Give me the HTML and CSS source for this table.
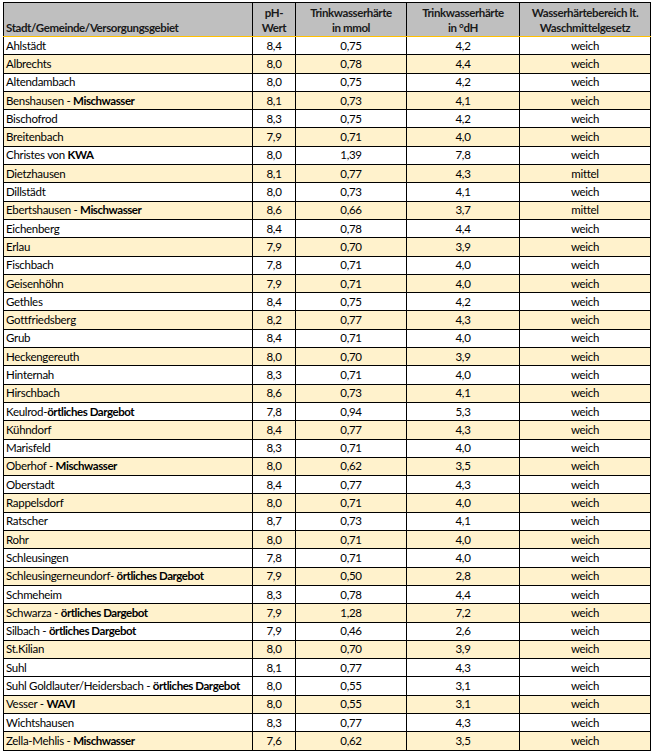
FILE: index.html
```html
<!DOCTYPE html>
<html lang="de">
<head>
<meta charset="utf-8">
<title>Wasserhärte</title>
<link rel="stylesheet" href="styles.css">
</head>
<body>
<table class="haerte">
<colgroup>
<col class="c-name"><col class="c-ph"><col class="c-mmol"><col class="c-dh"><col class="c-bereich">
</colgroup>
<thead>
<tr>
<th class="name">Stadt/Gemeinde/Versorgungsgebiet</th>
<th>pH-<br>Wert</th>
<th>Trinkwasserhärte<br>in mmol</th>
<th>Trinkwasserhärte<br>in °dH</th>
<th>Wasserhärtebereich lt.<br>Waschmittelgesetz</th>
</tr>
</thead>
<tbody>
<tr><td class="name">Ahlstädt</td><td>8,4</td><td>0,75</td><td>4,2</td><td>weich</td></tr>
<tr class="alt"><td class="name">Albrechts</td><td>8,0</td><td>0,78</td><td>4,4</td><td>weich</td></tr>
<tr><td class="name">Altendambach</td><td>8,0</td><td>0,75</td><td>4,2</td><td>weich</td></tr>
<tr class="alt"><td class="name">Benshausen - <b>Mischwasser</b></td><td>8,1</td><td>0,73</td><td>4,1</td><td>weich</td></tr>
<tr><td class="name">Bischofrod</td><td>8,3</td><td>0,75</td><td>4,2</td><td>weich</td></tr>
<tr class="alt"><td class="name">Breitenbach</td><td>7,9</td><td>0,71</td><td>4,0</td><td>weich</td></tr>
<tr><td class="name">Christes von <b>KWA</b></td><td>8,0</td><td>1,39</td><td>7,8</td><td>weich</td></tr>
<tr class="alt"><td class="name">Dietzhausen</td><td>8,1</td><td>0,77</td><td>4,3</td><td>mittel</td></tr>
<tr><td class="name">Dillstädt</td><td>8,0</td><td>0,73</td><td>4,1</td><td>weich</td></tr>
<tr class="alt"><td class="name">Ebertshausen - <b>Mischwasser</b></td><td>8,6</td><td>0,66</td><td>3,7</td><td>mittel</td></tr>
<tr><td class="name">Eichenberg</td><td>8,4</td><td>0,78</td><td>4,4</td><td>weich</td></tr>
<tr class="alt"><td class="name">Erlau</td><td>7,9</td><td>0,70</td><td>3,9</td><td>weich</td></tr>
<tr><td class="name">Fischbach</td><td>7,8</td><td>0,71</td><td>4,0</td><td>weich</td></tr>
<tr class="alt"><td class="name">Geisenhöhn</td><td>7,9</td><td>0,71</td><td>4,0</td><td>weich</td></tr>
<tr><td class="name">Gethles</td><td>8,4</td><td>0,75</td><td>4,2</td><td>weich</td></tr>
<tr class="alt"><td class="name">Gottfriedsberg</td><td>8,2</td><td>0,77</td><td>4,3</td><td>weich</td></tr>
<tr><td class="name">Grub</td><td>8,4</td><td>0,71</td><td>4,0</td><td>weich</td></tr>
<tr class="alt"><td class="name">Heckengereuth</td><td>8,0</td><td>0,70</td><td>3,9</td><td>weich</td></tr>
<tr><td class="name">Hinternah</td><td>8,3</td><td>0,71</td><td>4,0</td><td>weich</td></tr>
<tr class="alt"><td class="name">Hirschbach</td><td>8,6</td><td>0,73</td><td>4,1</td><td>weich</td></tr>
<tr><td class="name">Keulrod-<b>örtliches Dargebot</b></td><td>7,8</td><td>0,94</td><td>5,3</td><td>weich</td></tr>
<tr class="alt"><td class="name">Kühndorf</td><td>8,4</td><td>0,77</td><td>4,3</td><td>weich</td></tr>
<tr><td class="name">Marisfeld</td><td>8,3</td><td>0,71</td><td>4,0</td><td>weich</td></tr>
<tr class="alt"><td class="name">Oberhof - <b>Mischwasser</b></td><td>8,0</td><td>0,62</td><td>3,5</td><td>weich</td></tr>
<tr><td class="name">Oberstadt</td><td>8,4</td><td>0,77</td><td>4,3</td><td>weich</td></tr>
<tr class="alt"><td class="name">Rappelsdorf</td><td>8,0</td><td>0,71</td><td>4,0</td><td>weich</td></tr>
<tr><td class="name">Ratscher</td><td>8,7</td><td>0,73</td><td>4,1</td><td>weich</td></tr>
<tr class="alt"><td class="name">Rohr</td><td>8,0</td><td>0,71</td><td>4,0</td><td>weich</td></tr>
<tr><td class="name">Schleusingen</td><td>7,8</td><td>0,71</td><td>4,0</td><td>weich</td></tr>
<tr class="alt"><td class="name">Schleusingerneundorf- <b>örtliches Dargebot</b></td><td>7,9</td><td>0,50</td><td>2,8</td><td>weich</td></tr>
<tr><td class="name">Schmeheim</td><td>8,3</td><td>0,78</td><td>4,4</td><td>weich</td></tr>
<tr class="alt"><td class="name">Schwarza - <b>örtliches Dargebot</b></td><td>7,9</td><td>1,28</td><td>7,2</td><td>weich</td></tr>
<tr><td class="name">Silbach - <b>örtliches Dargebot</b></td><td>7,9</td><td>0,46</td><td>2,6</td><td>weich</td></tr>
<tr class="alt"><td class="name">St.Kilian</td><td>8,0</td><td>0,70</td><td>3,9</td><td>weich</td></tr>
<tr><td class="name">Suhl</td><td>8,1</td><td>0,77</td><td>4,3</td><td>weich</td></tr>
<tr><td class="name">Suhl Goldlauter/Heidersbach - <b>örtliches Dargebot</b></td><td>8,0</td><td>0,55</td><td>3,1</td><td>weich</td></tr>
<tr class="alt"><td class="name">Vesser - <b>WAVI</b></td><td>8,0</td><td>0,55</td><td>3,1</td><td>weich</td></tr>
<tr><td class="name">Wichtshausen</td><td>8,3</td><td>0,77</td><td>4,3</td><td>weich</td></tr>
<tr class="alt"><td class="name">Zella-Mehlis - <b>Mischwasser</b></td><td>7,6</td><td>0,62</td><td>3,5</td><td>weich</td></tr>
</tbody>
</table>
</body>
</html>
```
FILE: styles.css
```css
html, body {
  margin: 0;
  padding: 0;
  background: #ffffff;
}
body {
  padding: 2px 0 0 3px;
  font-family: Lato, "Liberation Sans", sans-serif;
  font-size: 11.5px;
  letter-spacing: -0.3px;
  color: #000;
}
.haerte {
  border-collapse: collapse;
  table-layout: fixed;
  width: 647px;
  border: 1px solid #000;
}
.c-name { width: 249px; }
.c-ph { width: 43px; }
.c-mmol { width: 111px; }
.c-dh { width: 113px; }
.c-bereich { width: 131px; }
.haerte th {
  background: #bfbfbf;
  font-weight: bold;
  letter-spacing: -0.4px;
  color: #1a1a1a;
  border-left: 1px solid #000;
  border-right: 1px solid #000;
  border-bottom: 1px solid #ffc000;
  height: 32px;
  padding: 0;
  line-height: 15px;
  text-align: center;
  vertical-align: middle;
}
.haerte th.name {
  text-align: left;
  vertical-align: bottom;
  padding: 0 0 1px 2px;
}
.haerte td {
  border: 1px solid #000;
  height: 17.3px;
  padding: 0;
  line-height: 14px;
  text-align: center;
  vertical-align: middle;
  white-space: nowrap;
}
.haerte td.name {
  text-align: left;
  padding-left: 2px;
}
.haerte tr.alt td {
  background: #fff2cc;
}
.haerte b {
  font-weight: bold;
  letter-spacing: -0.45px;
}
```
